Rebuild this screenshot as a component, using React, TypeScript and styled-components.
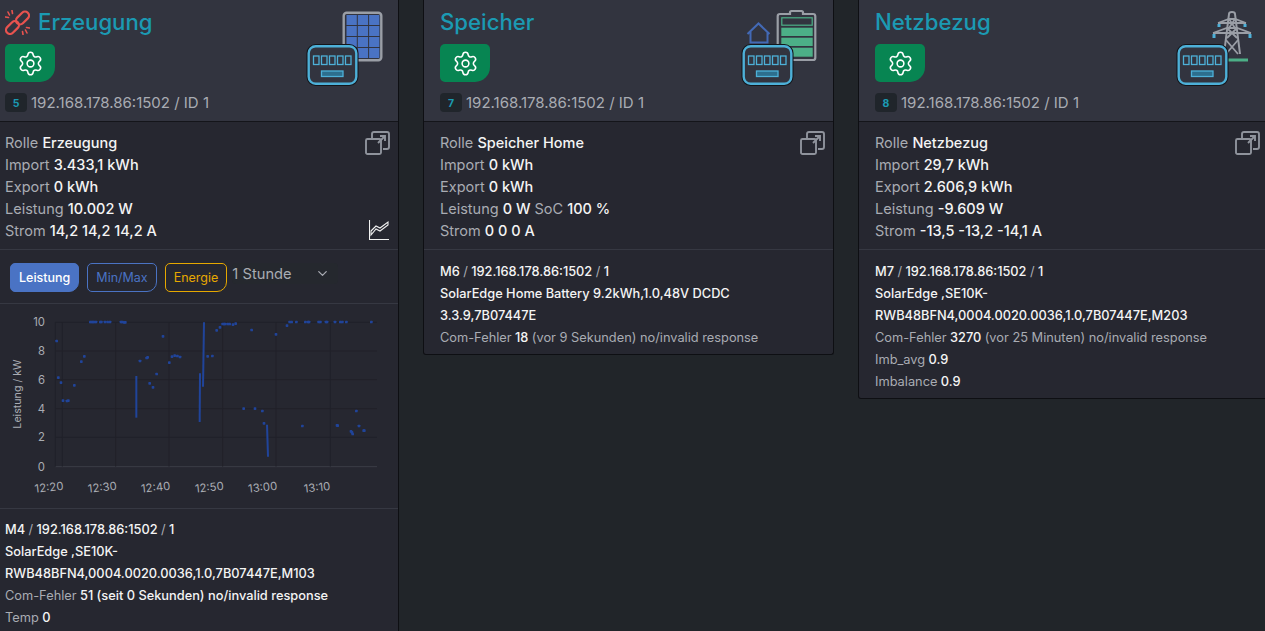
import React from 'react';
import styled, { createGlobalStyle } from 'styled-components';
import { Settings, ChevronDown } from 'lucide-react';

const GlobalStyle = createGlobalStyle`
    html, body {
        margin: 0;
        height: 100%;
        overflow: hidden;
        background: #212529;
    }
    body {
        font-family: Inter, "Liberation Sans", sans-serif;
        font-size: 14.5px;
        color: #f2f2f2;
    }
`

const Page = styled.div`
    width: 1265px;
    height: 631px;
    overflow: hidden;
`

const CardGrid = styled.div`
    display: grid;
    grid-template-columns: repeat(3, 411px);
    column-gap: 24px;
    margin-left: -12px;
    align-items: start;
`

const Card = styled.section`
    background: #262730;
    border: 1px solid #0e0f13;
    border-top: none;
    border-radius: 0 0 3px 3px;
`

const Header = styled.header`
    display: flex;
    justify-content: space-between;
    height: 122px;
    box-sizing: border-box;
    padding: 8px 14px 0 16px;
    background: #32343f;
    border-bottom: 1px solid #14151a;
`

const HeaderLeft = styled.div`
    display: flex;
    flex-direction: column;
    align-items: flex-start;
`

const TitleRow = styled.div`
    display: flex;
    align-items: center;
    gap: 8px;
    height: 28px;
`

const Title = styled.h2`
    margin: 0;
    font-size: 22.2px;
    line-height: 28px;
    font-weight: 500;
    color: #1b9ab3;
`

const GearButton = styled.button`
    display: flex;
    align-items: center;
    justify-content: center;
    width: 50px;
    height: 38px;
    margin-top: 8px;
    padding: 0;
    border: none;
    border-radius: 5px 5px 15px 5px;
    background: #078552;
    color: #fff;
`

const IdRow = styled.div`
    display: flex;
    align-items: center;
    gap: 4px;
    margin-top: 11px;
    font-size: 15px;
    color: #a9acb3;
`

const Badge = styled.span`
    display: flex;
    align-items: center;
    justify-content: center;
    width: 22px;
    height: 19px;
    padding-top: 2px;
    box-sizing: border-box;
    border-radius: 4px;
    background: #20252b;
    color: #1b9ab3;
    font-size: 10.5px;
    font-weight: 700;
`

const Section = styled.div`
    position: relative;
    padding: 10px 16px 7px;
    line-height: 22px;
    border-bottom: 1px solid #363842;
`

const InfoSection = styled.div<{ $tight?: boolean }>`
    padding: ${props => props.$tight ? '10px' : '11px'} 16px 5px;
    line-height: 22px;
`

const Line = styled.div`
    color: #a9acb3;
    b {
        color: #f4f4f4;
        font-weight: 500;
    }
`

const SmallLine = styled.div`
    font-size: 12.8px;
    font-weight: 500;
    color: #f4f4f4;
    span {
        color: #a9acb3;
        font-weight: 400;
    }
`

const CornerIcon = styled.svg<{ $bottom?: boolean }>`
    position: absolute;
    ${props => props.$bottom ? 'right: 9px; bottom: 9px;' : 'right: 8px; top: 9px;'}
`

const Tabs = styled.div`
    display: flex;
    align-items: flex-start;
    height: 54px;
    box-sizing: border-box;
    padding: 13px 0 0 21px;
    border-bottom: 1px solid #363842;
`

const TabButton = styled.button<{ $color: string; $active?: boolean }>`
    height: 29px;
    margin-right: 8px;
    padding: 0 8px;
    box-sizing: border-box;
    font-family: inherit;
    font-size: 12.5px;
    font-weight: ${props => props.$active ? 500 : 400};
    color: ${props => props.$active ? '#fff' : props.$color};
    background: ${props => props.$active ? props.$color : 'transparent'};
    border: 1px solid ${props => props.$color};
    border-radius: 5px 5px 10px 5px;
`

const RangeSelect = styled.div`
    display: flex;
    align-items: center;
    justify-content: space-between;
    width: 106px;
    height: 21px;
    margin-left: -3px;
    box-sizing: border-box;
    padding: 0 8px 0 0;
    background: #25282e;
    border-radius: 4px;
    font-size: 14.7px;
    color: #a9acb3;
`

const ChartWrap = styled.div`
    height: 204px;
    padding-left: 12px;
    border-bottom: 1px solid #363842;
    svg {
        display: block;
    }
`

const MeterIcon = styled.svg`
    flex: none;
    width: 80px;
    height: 80px;
`

const LinkIcon = styled.svg`
    flex: none;
    width: 25px;
    height: 25px;
    color: #e8534f;
`

// punkte aus dem diagramm, koordinaten im viewBox-raster
const dots: [number, number][] = [
    [167,273],[172,383],[180,398],[186,452],[198,453],[202,452],[220,406],[241,335],[250,319],
    [268,216],[272,216],[276,216],[280,216],[285,216],[298,216],[301,216],[312,216],[320,216],[327,216],
    [360,216],[364,216],[369,217],[373,217],[417,333],[437,324],[440,322],[446,400],[456,412],[467,372],
    [486,259],[505,338],[513,320],[521,317],[529,318],[537,321],[620,319],[634,318],[647,241],[657,232],
    [665,222],[669,222],[672,222],[680,222],[686,222],[696,224],[704,221],[728,476],[752,240],[762,476],
    [784,483],[789,520],[825,253],[858,227],[866,216],[872,216],[886,216],[904,528],[913,216],[921,216],
    [924,216],[953,216],[958,216],[975,216],[978,216],[1002,216],[1008,526],[1010,527],[1018,216],[1024,216],
    [1036,216],[1050,544],[1053,547],[1055,552],[1066,483],[1074,528],[1088,542],[1090,542],[1111,216],
]
const bars = [[406,378,406,503],[597,370,596,516],[609,217,606,410],[798,524,801,620]]
const yTicks: [string, number][] = [['10',217],['8',303],['6',389],['4',476],['2',562],['0',650]]
const xTicks: [string, number][] = [['12:20',184],['12:30',344],['12:40',504],['12:50',665],['13:00',825],['13:10',988]]

function PowerChart(){
    return(
        <ChartWrap>
            <svg width="398" height="204" viewBox="0 162 1194 612" fontFamily="Inter, sans-serif">
                {yTicks.map(([label, y]) => (
                    <g key={label}>
                        <line x1="163" x2="1128" y1={y} y2={y} stroke={label === '0' ? '#3b3d47' : '#202129'} strokeWidth="3"/>
                        <text x="132" y={y + 12} textAnchor="end" fontSize="34" fill="#a9acb3">{label}</text>
                    </g>
                ))}
                {xTicks.map(([label, x]) => (
                    <g key={label}>
                        <line x1={x} x2={x} y1="217" y2="650" stroke="#202129" strokeWidth="3"/>
                        <text x={x - 40} y="724" textAnchor="middle" fontSize="34" fill="#a9acb3"
                            transform={`rotate(-6 ${x - 40} 712)`}>{label}</text>
                    </g>
                ))}
                <line x1="163" x2="163" y1="217" y2="650" stroke="#202129" strokeWidth="3"/>
                <text transform="translate(60 432) rotate(-90)" textAnchor="middle" fontSize="32" fill="#a9acb3">Leistung / kW</text>
                {bars.map(([x1, y1, x2, y2]) => (
                    <line key={x1} x1={x1} y1={y1} x2={x2} y2={y2} stroke="#20449a" strokeWidth="6"/>
                ))}
                {dots.map(([x, y], i) => (
                    <rect key={i} x={x - 4} y={y - 4} width="8" height="8" rx="2" fill="#20449a"/>
                ))}
            </svg>
        </ChartWrap>
    )
}

function BrokenLink(){
    return(
        <LinkIcon viewBox="0 0 25 25" fill="none" stroke="currentColor" strokeWidth="2.2" strokeLinecap="round">
            <rect x="10" y="4" width="15" height="8" rx="4" transform="rotate(-45 17.500 8)"/>
            <rect x="0" y="13.500" width="15" height="8" rx="4" transform="rotate(-45 7.500 17.500)"/>
            <path d="M3 2l1.500 3M0.500 7l3 .5M7 .5l.5 3M22 23l-1.500-3M24.500 18l-3-.5M18 24.500l-.5-3" strokeWidth="1.600"/>
        </LinkIcon>
    )
}

function SolarPanel(){
    const cells = []
    for(let row = 0; row < 4; row++){
        for(let col = 0; col < 3; col++){
            cells.push(<rect key={`${row}-${col}`} x={42.5 + col * 11.3} y={7 + row * 11} width="10.3" height="10" fill="#4a73c4"/>)
        }
    }
    return(
        <g>
            <rect x="39.7" y="4.7" width="37.6" height="47.6" rx="3" fill="none" stroke="#9a9ea6" strokeWidth="2.400"/>
            {cells}
        </g>
    )
}

function Battery(){
    return(
        <g>
            <path d="M41 6h10v-1.500q0-1.500 1.500-1.500h10q1.500 0 1.500 1.500v1.500h10q2.300 0 2.300 2.300v41.400q0 2.300-2.300 2.300h-33q-2.300 0-2.300-2.300v-41.400q0-2.300 2.300-2.300z" fill="none" stroke="#9a9ea6" strokeWidth="2.200"/>
            <rect x="42.800" y="9.800" width="30.400" height="7.400" fill="none" stroke="#4caf87" strokeWidth="1.200"/>
            <rect x="42.300" y="19.700" width="31.400" height="8.300" fill="#4caf87"/>
            <rect x="42.300" y="29.700" width="31.400" height="8.300" fill="#4caf87"/>
            <rect x="42.300" y="39.700" width="31.400" height="9" fill="#4caf87"/>
            <path d="M8.500 26l11-10.500 11 10.500M11.500 23.500v11h17v-11" fill="none" stroke="#4369b5" strokeWidth="2"/>
        </g>
    )
}

function Tower(){
    return(
        <g>
            <path d="M50 46l5-40q0-2 3-2t3 2l5 40" fill="none" stroke="#9a9ea6" strokeWidth="2"/>
            <path d="M44 15l11-4h6l11 4M39 25l14-5h10l14 5M44 15h28M39 25h38M55 11l6 9M61 11l-6 9M53 20l10 10M63 20l-10 10M52 32l12 14M64 32l-12 14" fill="none" stroke="#9a9ea6" strokeWidth="1.800"/>
            <path d="M45 16v3M71 16v3M40 26v4M76 26v4" stroke="#4db0d8" strokeWidth="3"/>
            <path d="M54 52h20" stroke="#4caf87" strokeWidth="3"/>
        </g>
    )
}

function DeviceIcon({children}: {children: React.ReactNode}){
    return(
        <MeterIcon viewBox="0 0 80 80">
            {children}
            <rect x="4.700" y="38.200" width="47.600" height="37.600" rx="7" fill="#32343f" stroke="#14151a" strokeWidth="4.500"/>
            <rect x="4.700" y="38.200" width="47.600" height="37.600" rx="7" fill="#32343f" stroke="#4db0d8" strokeWidth="2.400"/>
            {[9, 17, 25, 33, 41].map((x) => (
                <rect key={x} x={x + .5} y="48" width="5.500" height="8.500" fill="none" stroke="#4db0d8" strokeWidth="1.300"/>
            ))}
            <rect x="17.500" y="63" width="21.500" height="5.500" fill="#2d6f8e" stroke="#4db0d8" strokeWidth="1.300"/>
        </MeterIcon>
    )
}

function ExpandIcon(){
    return(
        <CornerIcon width="25" height="25" viewBox="0 0 25 25" fill="none" stroke="#8f939c" strokeWidth="1.900">
            <path d="M7 7v-4q0-2 2-2h13q2 0 2 2v13q0 2-2 2h-4"/>
            <rect x="1" y="8" width="15" height="15" rx="1.500"/>
            <path d="M13 12l7-7M15 5h5v5"/>
        </CornerIcon>
    )
}

function TrendIcon(){
    return(
        <CornerIcon $bottom width="20" height="20" viewBox="0 0 20 20" fill="none" stroke="#f2f2f2" strokeWidth="1.100">
            <path d="M.5 0v19.500h19.500"/>
            <path d="M2 11l5-5 4 2 8-6v3l-8 6-4-2-5 6z"/>
        </CornerIcon>
    )
}

function CardHead({title, badge, broken, children}: {title: string, badge: number, broken?: boolean, children: React.ReactNode}){
    return(
        <Header>
            <HeaderLeft>
                <TitleRow>
                    {broken && <BrokenLink/>}
                    <Title>{title}</Title>
                </TitleRow>
                <GearButton><Settings size={27} strokeWidth={1.4}/></GearButton>
                <IdRow>
                    <Badge>{badge}</Badge>
                    192.168.178.86:1502 / ID 1
                </IdRow>
            </HeaderLeft>
            <DeviceIcon>{children}</DeviceIcon>
        </Header>
    )
}

function App(){
    return(
        <Page>
            <GlobalStyle/>
            <CardGrid>
                <Card>
                    <CardHead title="Erzeugung" badge={5} broken><SolarPanel/></CardHead>
                    <Section>
                        <ExpandIcon/>
                        <Line>Rolle <b>Erzeugung</b></Line>
                        <Line>Import <b>3.433,1 kWh</b></Line>
                        <Line>Export <b>0 kWh</b></Line>
                        <Line>Leistung <b>10.002 W</b></Line>
                        <Line>Strom <b>14,2 14,2 14,2 A</b></Line>
                        <TrendIcon/>
                    </Section>
                    <Tabs>
                        <TabButton $color="#4a73c4" $active>Leistung</TabButton>
                        <TabButton $color="#4a73c4">Min/Max</TabButton>
                        <TabButton $color="#e6a800">Energie</TabButton>
                        <RangeSelect>1 Stunde<ChevronDown size={15}/></RangeSelect>
                    </Tabs>
                    <PowerChart/>
                    <InfoSection $tight>
                        <SmallLine>M4 <span>/</span> 192.168.178.86:1502 <span>/</span> 1</SmallLine>
                        <SmallLine>SolarEdge ,SE10K-</SmallLine>
                        <SmallLine>RWB48BFN4,0004.0020.0036,1.0,7B07447E,M103</SmallLine>
                        <SmallLine><span>Com-Fehler</span> 51 (seit 0 Sekunden) no/invalid response</SmallLine>
                        <SmallLine><span>Temp</span> 0</SmallLine>
                    </InfoSection>
                </Card>
                <Card>
                    <CardHead title="Speicher" badge={7}><Battery/></CardHead>
                    <Section>
                        <ExpandIcon/>
                        <Line>Rolle <b>Speicher Home</b></Line>
                        <Line>Import <b>0 kWh</b></Line>
                        <Line>Export <b>0 kWh</b></Line>
                        <Line>Leistung <b>0 W</b> SoC <b>100 %</b></Line>
                        <Line>Strom <b>0 0 0 A</b></Line>
                    </Section>
                    <InfoSection>
                        <SmallLine>M6 <span>/</span> 192.168.178.86:1502 <span>/</span> 1</SmallLine>
                        <SmallLine>SolarEdge Home Battery 9.2kWh,1.0,48V DCDC</SmallLine>
                        <SmallLine>3.3.9,7B07447E</SmallLine>
                        <SmallLine><span>Com-Fehler</span> 18 <span>(vor 9 Sekunden) no/invalid response</span></SmallLine>
                    </InfoSection>
                </Card>
                <Card>
                    <CardHead title="Netzbezug" badge={8}><Tower/></CardHead>
                    <Section>
                        <ExpandIcon/>
                        <Line>Rolle <b>Netzbezug</b></Line>
                        <Line>Import <b>29,7 kWh</b></Line>
                        <Line>Export <b>2.606,9 kWh</b></Line>
                        <Line>Leistung <b>-9.609 W</b></Line>
                        <Line>Strom <b>-13,5 -13,2 -14,1 A</b></Line>
                    </Section>
                    <InfoSection>
                        <SmallLine>M7 <span>/</span> 192.168.178.86:1502 <span>/</span> 1</SmallLine>
                        <SmallLine>SolarEdge ,SE10K-</SmallLine>
                        <SmallLine>RWB48BFN4,0004.0020.0036,1.0,7B07447E,M203</SmallLine>
                        <SmallLine><span>Com-Fehler</span> 3270 <span>(vor 25 Minuten) no/invalid response</span></SmallLine>
                        <SmallLine><span>Imb_avg</span> 0.9</SmallLine>
                        <SmallLine><span>Imbalance</span> 0.9</SmallLine>
                    </InfoSection>
                </Card>
            </CardGrid>
        </Page>
    )
}

export default App
